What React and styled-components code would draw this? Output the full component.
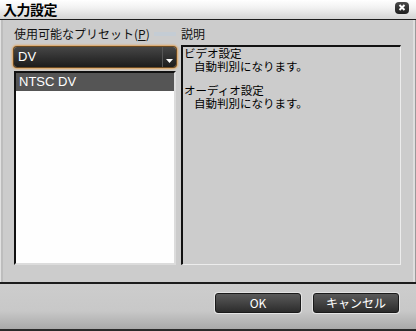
// Import Libraries
import React, { useState } from 'react'
import styled, { createGlobalStyle } from 'styled-components'


// Style
const GlobalStyle = createGlobalStyle`
    html, body {
        margin: 0;
        padding: 0;
        background: #cccccc;
    }
    body {
        font-family: "Noto Sans CJK JP", "Liberation Sans", sans-serif;
    }
`

const Window = styled.div`
    width: 416px;
    height: 331px;
    display: flex;
    flex-direction: column;
    background: #cccccc;
    box-sizing: border-box;
    box-shadow: inset 1px 0 0 #e2e2e2, inset 3px 0 0 #bdbdbd, inset -1px 0 0 #9a9a9a, inset -3px 0 0 #dedede;
    overflow: hidden;
`

const TitleBar = styled.div`
    height: 19px;
    display: flex;
    align-items: center;
    justify-content: space-between;
    padding: 0 7px 0 3px;
    background: linear-gradient(#ffffff 0%, #f2f2f2 40%, #d4d4d4 100%);
    border-bottom: 1px solid #1c1c1c;
    box-sizing: content-box;
`

const TitleText = styled.span`
    font-size: 14px;
    font-weight: bold;
    color: #000;
    line-height: 19px;
    letter-spacing: -0.5px;
`

const CloseButton = styled.div`
    width: 14px;
    height: 12px;
    margin-bottom: 4px;
    border-radius: 4px;
    background: linear-gradient(#4a4a4a, #1e1e1e);
    display: flex;
    align-items: center;
    justify-content: center;
`

const Body = styled.div`
    flex: 1;
    display: grid;
    grid-template-columns: 162px 220px;
    grid-template-rows: 14px 1fr;
    column-gap: 5px;
    row-gap: 4px;
    padding: 7px 15px 17px 14px;
    border-bottom: 2px solid #1c1c1c;
`

const Label = styled.div`
    font-size: 12px;
    line-height: 14px;
    color: #111;
    white-space: nowrap;
    display: flex;
    align-items: center;
`

const LabelFill = styled.span`
    flex: 1;
    height: 4px;
    margin-left: 4px;
    background: #c4ccd4;
`

const LeftColumn = styled.div`
    display: flex;
    flex-direction: column;
    gap: 4px;
    padding-top: 2px;
`

const Select = styled.div`
    height: 20px;
    display: flex;
    align-items: stretch;
    border-radius: 3px;
    background: linear-gradient(#464646, #1c1c1c);
    box-shadow: 0 0 0 1px #6b4a22, 0 0 2px 2px #e2a55c;
    color: #fff;
    font-size: 13px;
    box-sizing: border-box;
`

const SelectValue = styled.div`
    flex: 1;
    padding-left: 4px;
    line-height: 20px;
    font-family: "Liberation Sans", sans-serif;
`

const SelectArrow = styled.div`
    width: 13px;
    border-left: 1px solid #555;
    display: flex;
    align-items: flex-end;
    justify-content: center;
    padding-bottom: 4px;
`

const ListBox = styled.div`
    flex: 1;
    background: #fefefe;
    border-top: 2px solid #111;
    border-left: 2px solid #111;
    border-right: 2px solid #dcdcdc;
    border-bottom: 2px solid #dcdcdc;
`

const ListItem = styled.div`
    height: 18px;
    line-height: 18px;
    padding-left: 3px;
    font-size: 13px;
    font-family: "Liberation Sans", sans-serif;
    color: ${props => props.$selected ? '#ffffff' : '#111'};
    background: ${props => props.$selected ? '#555555' : 'transparent'};
`

const DescBox = styled.div`
    background: #cccccc;
    border-top: 2px solid #111;
    border-left: 2px solid #111;
    border-right: 1px solid #ececec;
    border-bottom: 1px solid #ececec;
    padding: 0 0 0 1px;
    font-size: 11.5px;
    line-height: 13px;
    color: #000;
`

const DescTitle = styled.div`
    margin-top: ${props => props.$gap ? '11px' : '0'};
`

const DescText = styled.div`
    padding-left: 10px;
`

const Footer = styled.div`
    height: 47px;
    display: flex;
    justify-content: flex-end;
    align-items: flex-start;
    gap: 12px;
    padding: 9px 17px 0 0;
    box-sizing: border-box;
    background: linear-gradient(#cdcdcd 0%, #c8c8c8 60%, #a9a9a9 100%);
    border-bottom: 2px solid #2a2a2a;
`

const Button = styled.button`
    width: 86px;
    height: 20px;
    padding: 0;
    border-radius: 3px;
    border: 1px solid #1a1a1a;
    background: linear-gradient(#5a5a5a, #2c2c2c);
    box-shadow: 0 0 0 1px #e4e4e4;
    color: #fff;
    font-size: 12px;
    font-family: "Noto Sans CJK JP", "Liberation Sans", sans-serif;
    line-height: 18px;
`


// Component
export default function App() {
    const [selected, setSelected] = useState(0)
    const presets = ['NTSC DV']

    return (
        <>
            <GlobalStyle />
            <Window>
                <TitleBar>
                    <TitleText>入力設定</TitleText>
                    <CloseButton>
                        <svg width="8" height="7" viewBox="0 0 8 7">
                            <path d="M1.5 1 L6.5 6 M6.5 1 L1.5 6" stroke="#fff" strokeWidth="2" />
                        </svg>
                    </CloseButton>
                </TitleBar>
                <Body>
                    <Label>
                        使用可能なプリセット(<u>P</u>)
                        <LabelFill />
                    </Label>
                    <Label>説明</Label>
                    <LeftColumn>
                        <Select>
                            <SelectValue>DV</SelectValue>
                            <SelectArrow>
                                <svg width="7" height="4" viewBox="0 0 7 4">
                                    <path d="M0 0 H7 L3.5 4 Z" fill="#fff" />
                                </svg>
                            </SelectArrow>
                        </Select>
                        <ListBox>
                            {presets.map((p, i) => (
                                <ListItem key={p} $selected={selected === i} onClick={() => setSelected(i)}>
                                    {p}
                                </ListItem>
                            ))}
                        </ListBox>
                    </LeftColumn>
                    <DescBox>
                        <DescTitle>ビデオ設定</DescTitle>
                        <DescText>自動判別になります。</DescText>
                        <DescTitle $gap>オーディオ設定</DescTitle>
                        <DescText>自動判別になります。</DescText>
                    </DescBox>
                </Body>
                <Footer>
                    <Button>OK</Button>
                    <Button>キャンセル</Button>
                </Footer>
            </Window>
        </>
    )
}
